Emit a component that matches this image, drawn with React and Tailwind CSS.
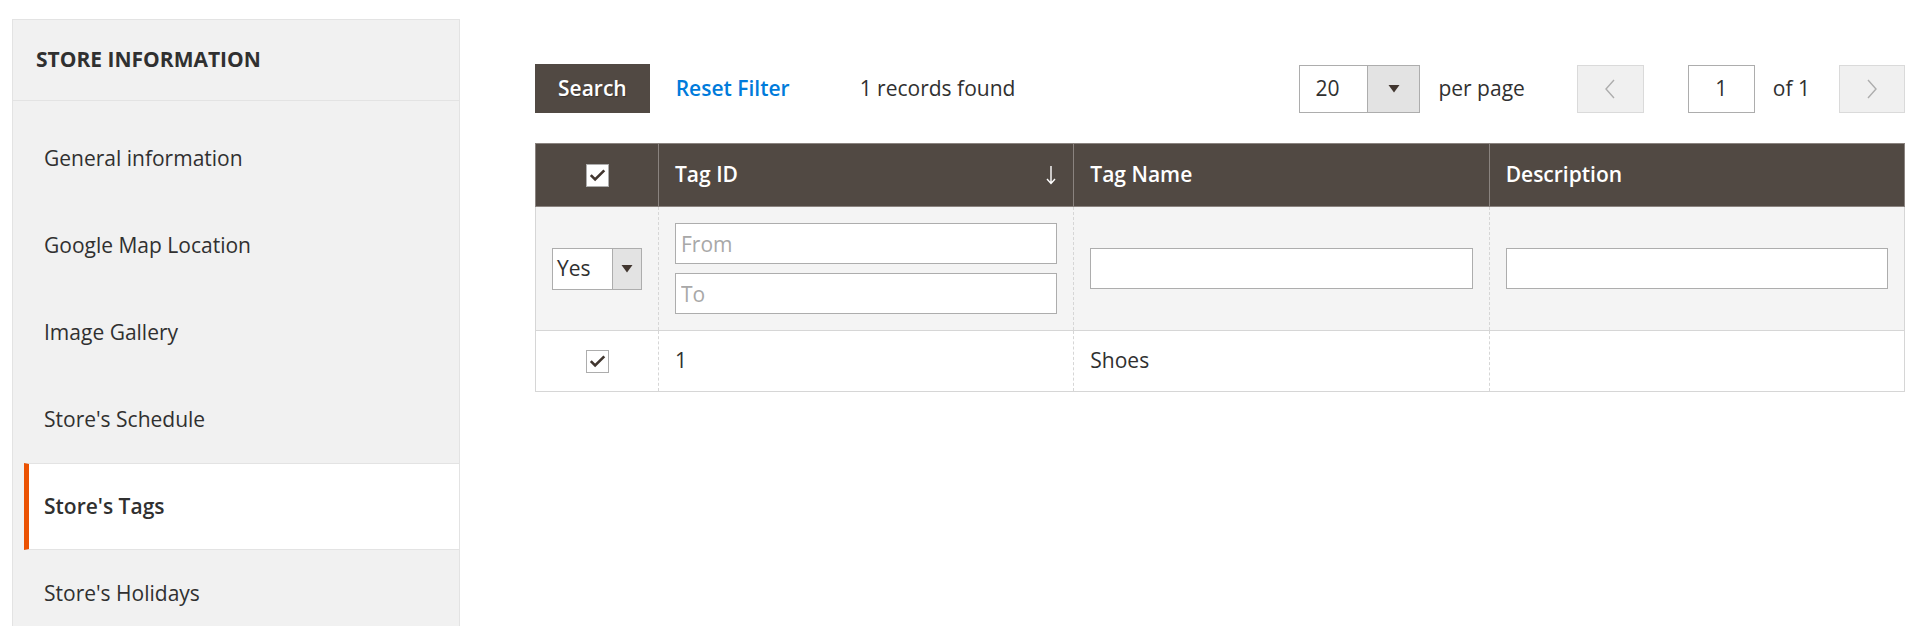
const NAV_ITEMS = [
  'General information',
  'Google Map Location',
  'Image Gallery',
  "Store's Schedule",
  "Store's Tags",
  "Store's Holidays",
]

const ACTIVE_NAV = "Store's Tags"

const Checkbox = () => (
  <span className="flex h-[23px] w-[23px] items-center justify-center border border-[#adadad] bg-white">
    <svg width="17" height="13" viewBox="0 0 17 13" fill="none">
      <path d="M1.8 6.2l4.3 4.3 9.2-9.2" stroke="#41362f" strokeWidth="2.6" />
    </svg>
  </span>
)

const Caret = () => (
  <svg width="12" height="8" viewBox="0 0 12 8">
    <path d="M0.5 0h11L6 7.5z" fill="#41362f" />
  </svg>
)

const Chevron = ({ dir }) => (
  <svg width="12" height="20" viewBox="0 0 12 20" fill="none">
    <path
      d={dir === 'left' ? 'M10 1L2 10l8 9' : 'M2 1l8 9-8 9'}
      stroke="#adadad"
      strokeWidth="1.4"
    />
  </svg>
)

function Sidebar() {
  return (
    <aside className="ml-3 mt-[19px] w-[448px] shrink-0 self-start border border-[#e3e3e3] bg-[#f1f1f1]">
      <div className="flex h-[81px] items-center border-b border-[#e3e3e3] px-[23px] font-bold uppercase text-[#303030]">
        Store Information
      </div>
      <ul className="pt-[14px]">
        {NAV_ITEMS.map((item) => {
          const active = item === ACTIVE_NAV
          return (
            <li
              key={item}
              className={
                active
                  ? 'ml-[11px] flex h-[87px] items-center border-y border-l-[5px] border-y-[#e3e3e3] border-l-[#eb5202] bg-white pl-[15px] font-semibold'
                  : 'ml-[11px] flex h-[87px] items-center border-l-[5px] border-transparent pl-[15px]'
              }
            >
              {item}
            </li>
          )
        })}
      </ul>
    </aside>
  )
}

function Toolbar() {
  return (
    <div className="flex h-[49px] items-center">
      <button className="h-full border border-[#514943] bg-[#514943] px-[22px] font-semibold text-white [text-shadow:1px_1px_1px_rgba(0,0,0,0.3)]">
        Search
      </button>
      <span className="ml-[26px] font-semibold text-[#007bdb]">Reset Filter</span>
      <span className="ml-[70px]">1 records found</span>

      <div className="ml-auto flex items-center">
        <div className="flex h-[48px] w-[121px] border border-[#adadad] bg-white">
          <span className="flex flex-1 items-center pl-[15px]">20</span>
          <span className="flex w-[52px] items-center justify-center border-l border-[#adadad] bg-[#e3e3e3]">
            <Caret />
          </span>
        </div>
        <span className="ml-[18px]">per page</span>
        <span className="ml-[52px] flex h-[48px] w-[67px] items-center justify-center border border-[#dadada] bg-[#f0f0f0]">
          <Chevron dir="left" />
        </span>
        <span className="ml-[44px] flex h-[48px] w-[67px] items-center justify-center border border-[#adadad] bg-white">
          1
        </span>
        <span className="ml-[18px]">of 1</span>
        <span className="ml-[29px] flex h-[48px] w-[66px] items-center justify-center border border-[#dadada] bg-[#f0f0f0]">
          <Chevron dir="right" />
        </span>
      </div>
    </div>
  )
}

const cellDashed = 'border-l border-dashed border-[#d6d6d6]'

function TagGrid() {
  return (
    <div className="mt-[30px]">
      {/* column titles */}
      <div className="grid h-[64px] grid-cols-[122px_1fr_1fr_1fr] border border-[#8a837f] bg-[#514943] font-semibold text-white">
        <div className="flex items-center justify-center">
          <Checkbox />
        </div>
        <div className="flex items-center justify-between border-l border-[#8a837f] px-4">
          <span>Tag ID</span>
          <svg width="10" height="20" viewBox="0 0 10 20" fill="none" className="mr-[1px]">
            <path d="M5 1v17M1 14l4 4.5 4-4.5" stroke="#fff" strokeWidth="1.4" />
          </svg>
        </div>
        <div className="flex items-center border-l border-[#8a837f] px-4">Tag Name</div>
        <div className="flex items-center border-l border-[#8a837f] px-4">Description</div>
      </div>

      {/* filters */}
      <div className="grid h-[124px] grid-cols-[122px_1fr_1fr_1fr] border-x border-b border-[#d6d6d6] bg-[#f4f4f4]">
        <div className="flex items-center px-4">
          <div className="flex h-[42px] w-full border border-[#adadad] bg-white">
            <span className="flex flex-1 items-center pl-[4px]">Yes</span>
            <span className="flex w-[29px] items-center justify-center border-l border-[#adadad] bg-[#e3e3e3]">
              <Caret />
            </span>
          </div>
        </div>
        <div className={`flex flex-col justify-center gap-[9px] px-4 ${cellDashed}`}>
          <input
            readOnly
            placeholder="From"
            className="h-[41px] w-full border border-[#adadad] bg-white px-[5px] placeholder:text-[#a8a8a8] outline-none"
          />
          <input
            readOnly
            placeholder="To"
            className="h-[41px] w-full border border-[#adadad] bg-white px-[5px] placeholder:text-[#a8a8a8] outline-none"
          />
        </div>
        <div className={`flex items-center px-4 ${cellDashed}`}>
          <input readOnly className="h-[41px] w-full border border-[#adadad] bg-white outline-none" />
        </div>
        <div className={`flex items-center px-4 ${cellDashed}`}>
          <input readOnly className="h-[41px] w-full border border-[#adadad] bg-white outline-none" />
        </div>
      </div>

      {/* rows */}
      <div className="grid h-[61px] grid-cols-[122px_1fr_1fr_1fr] border-x border-b border-[#d6d6d6] bg-white">
        <div className="flex items-center justify-center">
          <Checkbox />
        </div>
        <div className={`flex items-center px-4 ${cellDashed}`}>1</div>
        <div className={`flex items-center px-4 ${cellDashed}`}>Shoes</div>
        <div className={cellDashed} />
      </div>
    </div>
  )
}

export default function App() {
  return (
    <div className="flex h-[626px] overflow-hidden bg-white font-['Open_Sans',sans-serif] text-[21px] text-[#303030]">
      <Sidebar />
      <main className="ml-[75px] mr-[15px] flex-1 pt-[64px]">
        <Toolbar />
        <TagGrid />
      </main>
    </div>
  )
}
